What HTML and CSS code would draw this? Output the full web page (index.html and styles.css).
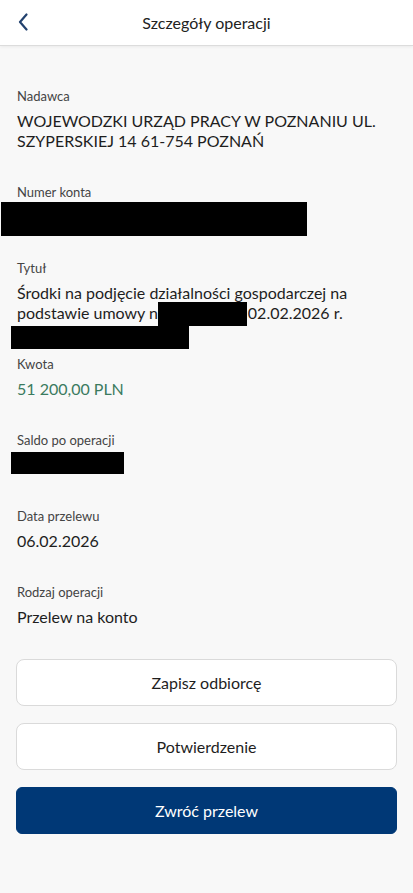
FILE: index.html
```html
<!DOCTYPE html>
<html lang="pl">
<head>
  <meta charset="UTF-8">
  <meta name="viewport" content="width=device-width, initial-scale=1.0">
  <title>Szczegóły operacji</title>
  <link rel="stylesheet" href="styles.css">
</head>
<body>
  <header class="naglowek">
    <button class="wstecz" aria-label="Wstecz">
      <svg width="10" height="18" viewBox="0 0 10 18"><path d="M8.5 1.5 L2 9 L8.5 16.5" fill="none" stroke="#22416e" stroke-width="2.2" stroke-linecap="round" stroke-linejoin="round"/></svg>
    </button>
    <h1>Szczegóły operacji</h1>
  </header>

  <main class="szczegoly">
    <div class="pole">
      <div class="etykieta">Nadawca</div>
      <div class="wartosc">WOJEWODZKI URZĄD PRACY W POZNANIU UL. SZYPERSKIEJ 14 61-754 POZNAŃ</div>
    </div>

    <div class="pole">
      <div class="etykieta">Numer konta</div>
      <div class="wartosc ukryte">&nbsp;<span class="zaslona konto"></span></div>
    </div>

    <div class="pole">
      <div class="etykieta">Tytuł</div>
      <div class="wartosc ukryte">Środki na podjęcie działalności gospodarczej na podstawie umowy nr<span class="luka"></span>02.02.2026 r.<span class="zaslona nr"></span><span class="zaslona reszta"></span></div>
    </div>

    <div class="pole">
      <div class="etykieta">Kwota</div>
      <div class="wartosc kwota">51 200,00 PLN</div>
    </div>

    <div class="pole">
      <div class="etykieta">Saldo po operacji</div>
      <div class="wartosc ukryte">&nbsp;<span class="zaslona saldo"></span></div>
    </div>

    <div class="pole">
      <div class="etykieta">Data przelewu</div>
      <div class="wartosc">06.02.2026</div>
    </div>

    <div class="pole">
      <div class="etykieta">Rodzaj operacji</div>
      <div class="wartosc">Przelew na konto</div>
    </div>

    <div class="akcje">
      <button class="przycisk">Zapisz odbiorcę</button>
      <button class="przycisk">Potwierdzenie</button>
      <button class="przycisk glowny">Zwróć przelew</button>
    </div>
  </main>
</body>
</html>
```

FILE: styles.css
```css
body {
  margin: 0;
  background: #f8f8f8;
  font-family: Lato, "Noto Sans", Arial, sans-serif;
  color: #1e1e1e;
}
.naglowek {
  height: 45px;
  background: #fff;
  border-bottom: 1px solid #dcdcdc;
  box-shadow: 0 1px 3px rgba(0, 0, 0, 0.06);
  display: flex;
  align-items: center;
  justify-content: center;
  position: relative;
}
.naglowek h1 {
  margin: 0;
  font-size: 16px;
  font-weight: normal;
  color: #222;
}
.wstecz {
  position: absolute;
  left: 14px;
  top: 13px;
  border: none;
  background: none;
  padding: 0 4px;
  height: 20px;
}
.szczegoly {
  padding: 41px 16px 40px 17px;
}
.pole {
  margin-bottom: 32px;
}
.etykieta {
  font-size: 13px;
  line-height: 18px;
  color: #444;
  margin-bottom: 6px;
}
.wartosc {
  font-size: 16px;
  line-height: 20px;
  color: #1e1e1e;
}
.kwota {
  color: #3b7b5f;
}
.ukryte {
  position: relative;
}
.luka {
  display: inline-block;
  width: 84px;
}
.zaslona {
  position: absolute;
  background: #000;
}
.konto {
  left: -16px;
  top: -5px;
  width: 306px;
  height: 34px;
}
.nr {
  left: 141px;
  top: 19px;
  width: 89px;
  height: 24px;
}
.reszta {
  left: -6px;
  top: 43px;
  width: 178px;
  height: 23px;
}
.saldo {
  left: -6px;
  top: -3px;
  width: 113px;
  height: 22px;
}
.akcje {
  display: flex;
  flex-direction: column;
  gap: 17px;
  margin-left: -1px;
}
.przycisk {
  height: 47px;
  border: 1px solid #dadada;
  border-radius: 8px;
  background: #fff;
  font-family: inherit;
  font-size: 16px;
  color: #1e1e1e;
}
.glowny {
  background: #003876;
  border-color: #003876;
  border-radius: 6px;
  color: #fff;
}
```
